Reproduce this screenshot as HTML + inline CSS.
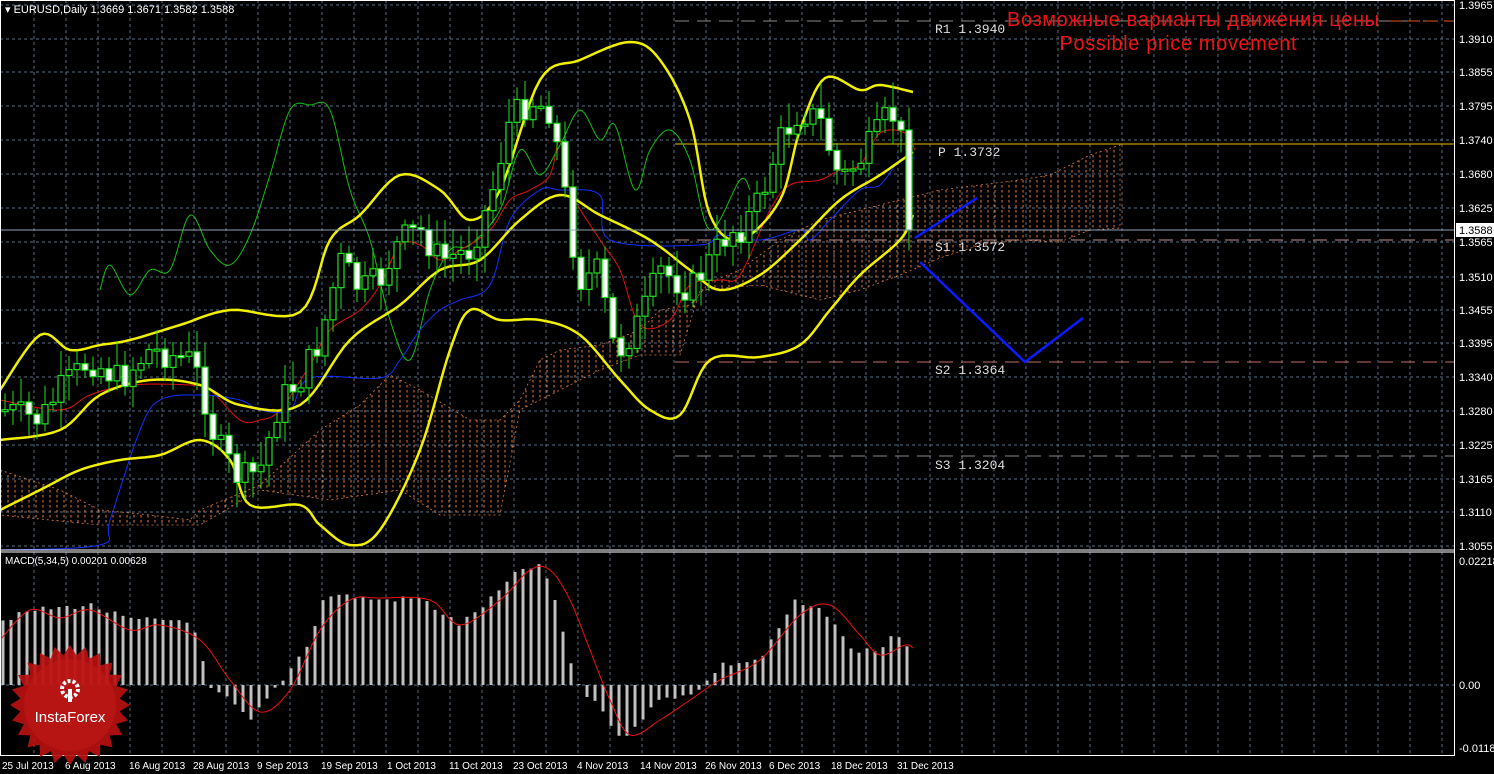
<!DOCTYPE html>
<html><head><meta charset="utf-8"><style>
html,body{margin:0;padding:0;background:#000;width:1494px;height:774px;overflow:hidden}
svg{display:block}
text{font-family:"Liberation Sans",sans-serif}
</style></head><body>
<svg id="s" width="1494" height="774" viewBox="0 0 1494 774" xmlns="http://www.w3.org/2000/svg">
<defs>
<pattern id="hat" width="7" height="5" patternUnits="userSpaceOnUse">
<line x1="1" y1="0" x2="1" y2="2.5" stroke="#e07838" stroke-width="1"/>
</pattern>
</defs>
<g id="grid"></g>
<g id="cloud"></g>
<g id="lvl"></g>
<g id="lines"></g>
<g id="candles"></g>
<g id="macd"></g>
<line x1="0" y1="230" x2="1455" y2="230" stroke="#8aa0b4" stroke-width="1"/>
<polyline points="915,238 977,198" fill="none" stroke="#0a1cff" stroke-width="2.5"/>
<polyline points="920,262 1025,362 1083,318" fill="none" stroke="#0a1cff" stroke-width="2.5"/>
<rect x="0.5" y="0.5" width="1454" height="755" fill="none" stroke="#fff"/>
<line x1="0" y1="550" x2="1455" y2="550" stroke="#fff"/>
<line x1="0" y1="552" x2="1455" y2="552" stroke="#fff"/>
<g font-size="11" fill="#fff" id="axis"></g>
<rect x="1456" y="223" width="38" height="14" fill="#fff"/>
<text x="1459" y="234" font-size="11" fill="#000">1.3588</text>
<g font-size="11" fill="#fff">
<text x="1459" y="565">0.02218</text>
<text x="1459" y="689">0.00</text>
<text x="1459" y="752">-0.01187</text>
</g>
<text x="5" y="13" font-size="11" fill="#fff">▾ EURUSD,Daily  1.3669 1.3671 1.3582 1.3588</text>
<text x="5" y="564" font-size="10" fill="#fff">MACD(5,34,5) 0.00201 0.00628</text>
<g font-size="13" fill="#ddd" style="font-family:'Liberation Mono',monospace">
<text x="935" y="33" style="font-family:'Liberation Mono',monospace">R1 1.3940</text>
<text x="938" y="156" style="font-family:'Liberation Mono',monospace">P 1.3732</text>
<text x="935" y="251" style="font-family:'Liberation Mono',monospace">S1 1.3572</text>
<text x="935" y="374" style="font-family:'Liberation Mono',monospace">S2 1.3364</text>
<text x="935" y="469" style="font-family:'Liberation Mono',monospace">S3 1.3204</text>
</g>
<text x="1193" y="26" font-size="20" fill="#f01414" text-anchor="middle" textLength="372">Возможные варианты движения цены</text>
<text x="1178" y="50" font-size="20" fill="#f01414" text-anchor="middle" textLength="237">Possible price movement</text>
<g font-size="10" fill="#fff" id="dates"></g>
<polygon id="star" fill="#b81010" opacity="0.92"/>
<circle cx="70" cy="705" r="46" fill="#c01818" opacity="0.6"/>
<g fill="#fff">
<circle cx="70" cy="689" r="8" fill="none" stroke="#fff" stroke-width="4" stroke-dasharray="3 2"/>
<rect x="68" y="689" width="4" height="13"/>
</g>
<text x="70" y="722" font-size="15" fill="#fff" text-anchor="middle">InstaForex</text>
</svg>
<script>
var NS="http://www.w3.org/2000/svg";
function el(p,t,a){var e=document.createElementNS(NS,t);for(var k in a)e.setAttribute(k,a[k]);document.getElementById(p).appendChild(e);return e;}
function interp(pts,x){if(x<=pts[0][0])return pts[0][1];for(var i=1;i<pts.length;i++){if(x<=pts[i][0]){var a=pts[i-1],b=pts[i];return a[1]+(b[1]-a[1])*(x-a[0])/(b[0]-a[0]);}}return pts[pts.length-1][1];}
function cr(pts){
 var out=[];for(var i=0;i<pts.length-1;i++){var p0=pts[Math.max(0,i-1)],p1=pts[i],p2=pts[i+1],p3=pts[Math.min(pts.length-1,i+2)];
 for(var t=0;t<1;t+=0.125){var t2=t*t,t3=t2*t;
 var f=function(a,b,c,d){return 0.5*((2*b)+(-a+c)*t+(2*a-5*b+4*c-d)*t2+(-a+3*b-3*c+d)*t3);};
 out.push([f(p0[0],p1[0],p2[0],p3[0]),f(p0[1],p1[1],p2[1],p3[1])]);}}
 out.push(pts[pts.length-1]);return out;}
function str(a){return a.map(function(p){return p[0].toFixed(1)+","+p[1].toFixed(1)}).join(" ");}
for(var x=34;x<1455;x+=32){el("grid","line",{x1:x,y1:0,x2:x,y2:550,stroke:"#5a6e82","stroke-dasharray":"3 3"});el("grid","line",{x1:x,y1:552,x2:x,y2:756,stroke:"#5a6e82","stroke-dasharray":"3 3"});}
var py=[[5,"1.3965"],[39,"1.3910"],[72,"1.3855"],[106,"1.3795"],[140,"1.3740"],[174,"1.3680"],[208,"1.3625"],[242,"1.3565"],[277,"1.3510"],[310,"1.3455"],[343,"1.3395"],[377,"1.3340"],[411,"1.3280"],[445,"1.3225"],[479,"1.3165"],[512,"1.3110"],[546,"1.3055"]];
py.forEach(function(p){el("grid","line",{x1:0,y1:p[0],x2:1455,y2:p[0],stroke:"#5a6e82","stroke-dasharray":"3 3"});var t=el("axis","text",{x:1459,y:p[0]+4});t.textContent=p[1];});
el("grid","line",{x1:0,y1:685,x2:1455,y2:685,stroke:"#5a6e82","stroke-dasharray":"3 3"});
el("lvl","line",{x1:675,y1:21,x2:1455,y2:21,stroke:"#888","stroke-dasharray":"14 8"});
el("lvl","line",{x1:1390,y1:21,x2:1455,y2:21,stroke:"#e05020","stroke-dasharray":"12 6"});
el("lvl","line",{x1:675,y1:144,x2:1455,y2:144,stroke:"#f0b800"});
el("lvl","line",{x1:675,y1:240,x2:1455,y2:240,stroke:"#c09090","stroke-dasharray":"14 8"});
el("lvl","line",{x1:675,y1:362,x2:1455,y2:362,stroke:"#c07060","stroke-dasharray":"14 8"});
el("lvl","line",{x1:675,y1:456,x2:1455,y2:456,stroke:"#888","stroke-dasharray":"14 8"});
var ct=[[0,470],[60,490],[100,510],[150,515],[190,520],[200,510],[260,485],[320,430],[360,405],[390,375],[420,390],[470,420],[500,420],[520,400],[540,360],[560,350],[600,345],[640,330],[660,310],[690,305],[710,282],[740,270],[780,240],[820,220],[860,210],[900,200],[940,190],[980,185],[1020,180],[1050,175],[1090,155],[1120,145]];
var cb=[[0,515],[100,525],[200,525],[260,490],[330,500],[400,490],[440,515],[500,515],[520,410],[560,390],[600,370],[640,355],[680,355],[700,290],[760,285],[820,300],[860,290],[900,275],[940,258],[980,245],[1020,240],[1060,242],[1090,230],[1120,228]];
el("cloud","polygon",{points:str(ct)+" "+str(cb.slice().reverse()),fill:"url(#hat)",stroke:"#e07838","stroke-width":"0.8","stroke-dasharray":"2 3"});
function pl(pts,c,w){el("lines","polyline",{points:str(cr(pts)),fill:"none",stroke:c,"stroke-width":w,"stroke-linejoin":"round"});}
pl([[100,290],[110,265],[130,295],[150,270],[170,270],[190,215],[210,250],[230,265],[250,235],[270,175],[290,110],[310,105],[330,110],[350,190],[370,240],[390,320],[410,360],[430,290],[450,250],[470,245],[500,210],[520,150],[540,175],[560,145],[580,110],[600,140],[615,125],[635,190],[650,150],[670,130],[690,160],[710,230],[740,180],[750,190]],"#10c010",1);
pl([[0,400],[60,410],[90,395],[130,385],[190,385],[210,390],[240,420],[260,420],[280,410],[310,365],[330,330],[360,310],[380,285],[400,245],[420,245],[440,260],[460,250],[490,230],[510,200],[530,190],[550,175],[560,140],[570,190],[600,240],[620,270],[640,325],[670,320],[690,285],[720,280],[740,275],[770,210],[790,185],[820,180],[840,170],[860,165],[880,133],[905,133],[915,150]],"#e01010",1);
pl([[0,550],[100,545],[110,520],[140,430],[160,400],[200,395],[240,400],[260,410],[290,410],[310,378],[380,378],[400,360],[420,330],[440,310],[460,300],[490,285],[510,220],[540,190],[560,190],[600,195],[610,240],[700,245],[720,235],[760,240],[800,230],[810,240],[830,220],[860,190],[880,185],[900,160],[915,158]],"#1030ff",1);
var Y="#f0f000";
pl([[0,390],[40,335],[70,350],[100,345],[130,340],[180,325],[230,310],[300,312],[330,240],[360,215],[400,175],[440,190],[470,220],[500,190],[540,80],[580,60],[630,42],[660,60],[690,120],[710,215],[740,240],[780,200],[800,130],[825,78],[860,90],[880,85],[913,92]],Y,2.5);
pl([[0,440],[60,430],[100,395],[150,380],[200,385],[240,405],[300,405],[350,340],[400,305],[440,270],[480,260],[520,220],[560,195],[600,215],[650,240],[690,270],[720,290],[760,275],[800,240],[840,200],[880,175],[913,152]],Y,2.5);
pl([[0,510],[40,490],[80,470],[120,460],[160,455],[200,440],[230,460],[250,505],[300,505],[320,525],[350,545],[380,530],[420,450],[450,350],[470,310],[500,320],[540,320],[580,335],[620,380],[650,410],[680,415],[710,360],[760,357],[800,345],[830,310],[860,275],[900,240],[913,215]],Y,2.5);
var cp=[[5,410],[40,420],[60,390],[90,360],[120,380],[150,350],[190,360],[200,380],[215,440],[240,480],[260,470],[280,400],[300,380],[320,340],[340,260],[360,290],[380,280],[400,240],[420,230],[440,260],[470,250],[490,200],[510,120],[530,100],[550,110],[560,160],[570,230],[580,280],[600,270],[610,340],[620,350],[640,320],[660,270],[690,290],[710,260],[730,230],[740,230],[760,200],[780,140],[800,110],[820,120],[840,180],[860,160],[880,130],[890,110],[900,130],[905,180],[913,230]];
var seed=7;function rnd(){seed=(seed*9301+49297)%233280;return seed/233280;}
var prev=interp(cp,0);
for(var x=5;x<=913;x+=8){var c=interp(cp,x)+(rnd()-0.5)*30;if(x>=909)c=230;var o=prev;prev=c;
var hi=Math.min(o,c)-rnd()*22-4,lo=Math.max(o,c)+rnd()*22+4;
el("candles","line",{x1:x,y1:hi,x2:x,y2:lo,stroke:"#20e020"});
var by=Math.min(o,c),bh=Math.max(2,Math.abs(c-o));
el("candles","rect",{x:x-3,y:by,width:6,height:bh,fill:c>o?"#fff":"#000",stroke:"#20e020","stroke-width":1.2});}
var mh=[[3,620],[35,610],[90,605],[130,620],[190,620],[200,650],[210,690],[230,700],[250,722],[270,695],[290,670],[310,640],[325,595],[340,595],[380,600],[420,598],[460,625],[490,600],[520,570],[540,565],[555,600],[570,660],[580,690],[600,705],[620,740],[640,720],[660,700],[700,690],[720,665],[760,660],[795,602],[830,615],[850,650],[880,650],[895,632],[905,640],[913,675]];
for(var x=3;x<=913;x+=8){var t=interp(mh,x)+(rnd()-0.5)*6;el("macd","rect",{x:x-1.5,y:Math.min(t,685),width:3,height:Math.abs(685-t),fill:"#c0c0c0"});}
el("macd","polyline",{points:str(cr([[0,640],[30,610],[60,618],[90,610],[130,630],[160,625],[200,640],[230,680],[260,712],[290,690],[320,630],[350,600],[380,598],[430,600],[460,625],[500,600],[530,570],[550,570],[570,600],[590,650],[610,700],[630,735],[660,720],[690,700],[720,680],[760,660],[800,615],[830,605],[860,635],[880,655],[905,645],[913,648]])),fill:"none",stroke:"#f01010","stroke-width":1});
[["25 Jul 2013",2],["6 Aug 2013",65],["16 Aug 2013",129],["28 Aug 2013",193],["9 Sep 2013",257],["19 Sep 2013",321],["1 Oct 2013",387],["11 Oct 2013",449],["23 Oct 2013",513],["4 Nov 2013",577],["14 Nov 2013",640],["26 Nov 2013",705],["6 Dec 2013",769],["18 Dec 2013",831],["31 Dec 2013",897]].forEach(function(p){var t=el("dates","text",{x:p[1],y:769});t.textContent=p[0];});
var s=[];for(var i=0;i<48;i++){var a=i*Math.PI/24,R=i%2?50:60;s.push((70+R*Math.cos(a)).toFixed(1)+","+(705+R*Math.sin(a)).toFixed(1));}
document.getElementById("star").setAttribute("points",s.join(" "));
</script>
</body></html>
